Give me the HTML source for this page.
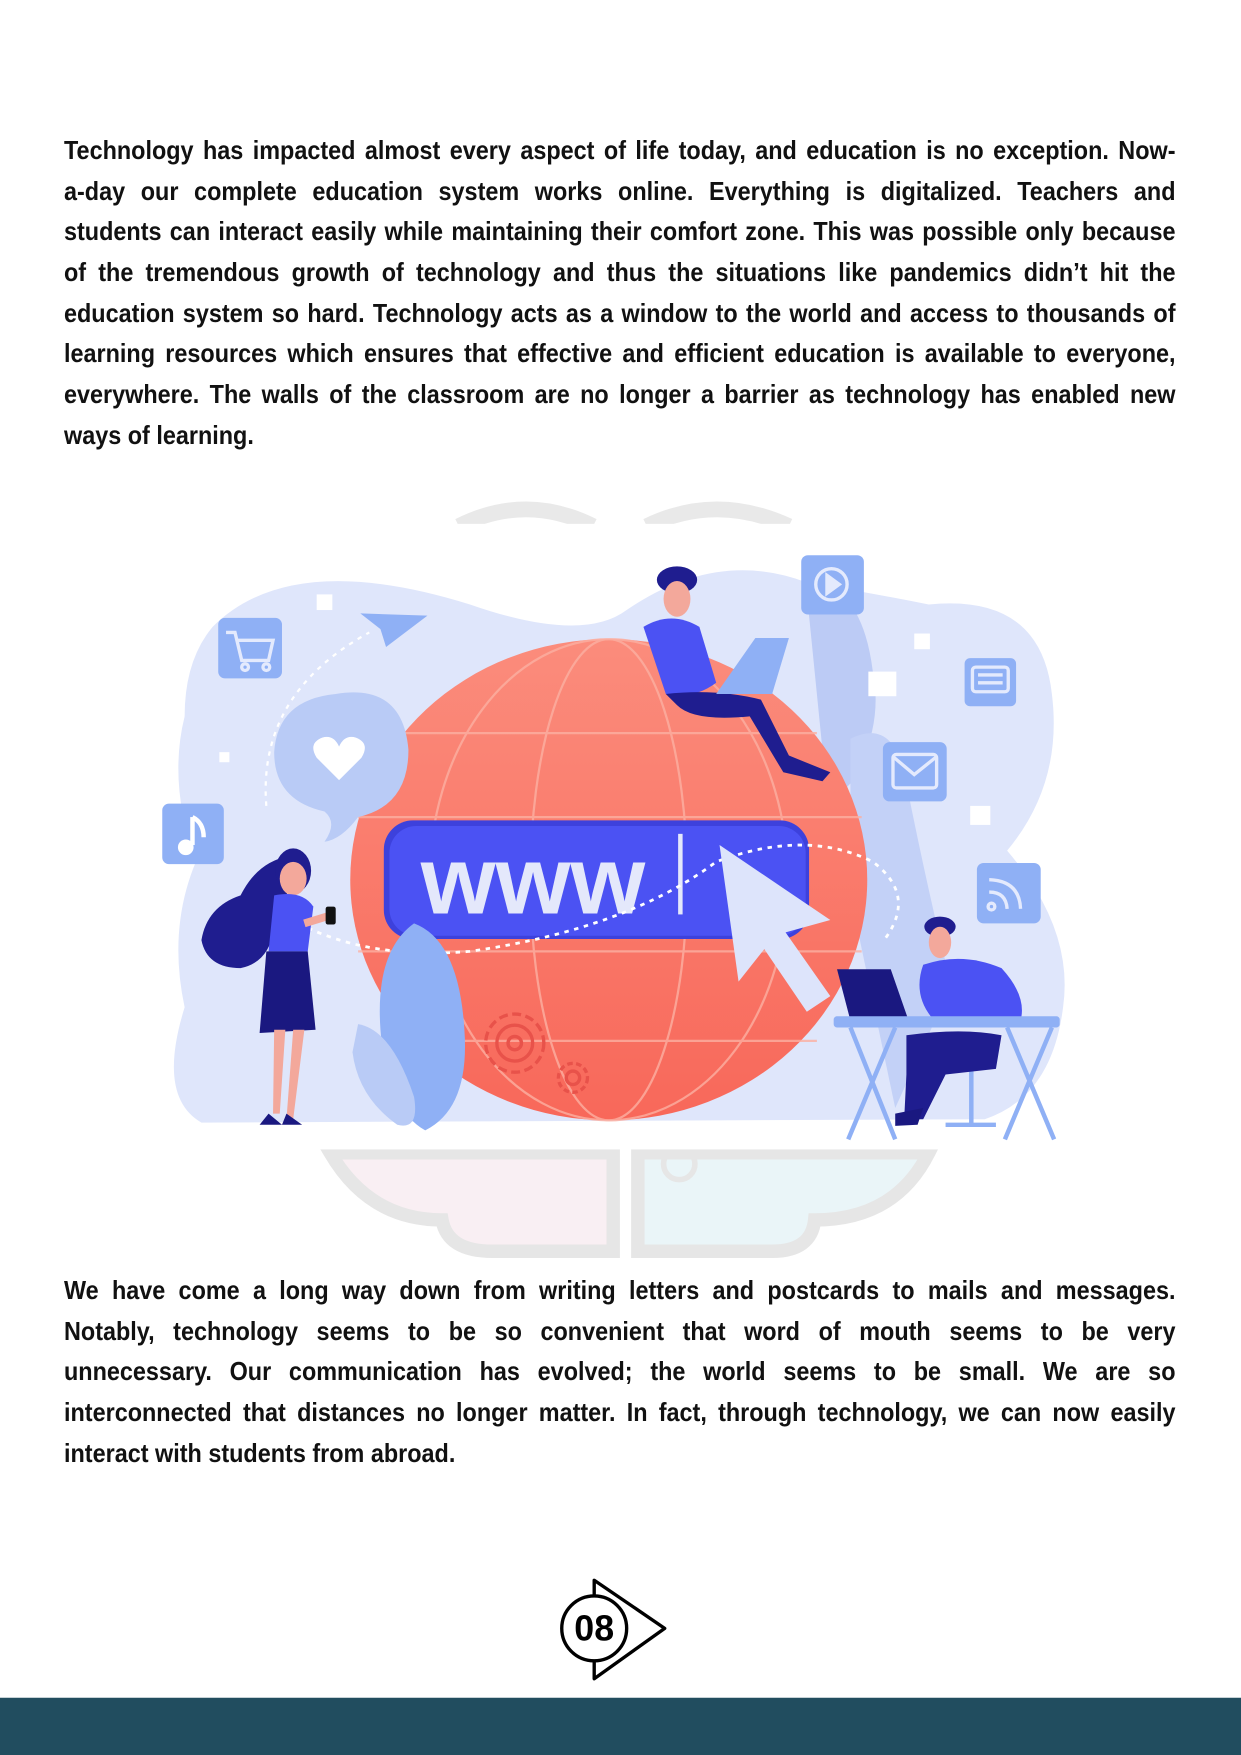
<!DOCTYPE html>
<html><head><meta charset="utf-8"><style>
html,body{margin:0;padding:0;background:#fff;}
body{width:1241px;height:1755px;position:relative;overflow:hidden;font-family:"Liberation Sans",sans-serif;}
.p{position:absolute;left:64px;width:1112px;}
.l{display:block;width:1235px;transform:scaleX(0.9);transform-origin:0 0;font-weight:bold;font-size:26px;line-height:40.7px;height:40.7px;color:#111;text-align:justify;text-align-last:justify;white-space:nowrap;}
.l.last{text-align-last:left;}
svg{position:absolute;left:0;top:0;}
</style></head><body>
<svg width="1241" height="1755" viewBox="0 0 1109 1568" xmlns="http://www.w3.org/2000/svg">
<g fill="none" stroke="#e9e9e9" stroke-width="14">
<path d="M410,470 Q470,440 530,470"/><path d="M578,470 Q640,440 705,470"/>
</g>
<path d="M295,1030 Q330,1090 395,1090 Q400,1118 440,1118 L548,1118 L548,1030Z" fill="#f9eff3" stroke="#e6e6e6" stroke-width="12"/>
<path d="M570,1030 L570,1118 L690,1118 Q725,1118 728,1090 Q800,1090 830,1030Z" fill="#eaf5f8" stroke="#e6e6e6" stroke-width="12"/>
<circle cx="607" cy="1040" r="14" fill="none" stroke="#e6e6e6" stroke-width="5"/>
<rect x="130" y="468" width="850" height="559" fill="#fff"/>
<path d="M190,560 Q260,490 420,540 Q520,575 560,545 Q640,490 720,520 Q780,530 830,540 Q930,530 940,620 Q950,700 900,760 Q960,830 950,900 Q940,980 880,1000 L180,1003 Q140,980 165,900 Q150,830 175,770 Q150,700 165,640 Q165,590 190,560Z" fill="#dfe6fb"/>
<path d="M720,520 Q770,520 780,600 Q790,650 760,700 L740,720Z" fill="#bccbf5"/>
<path d="M760,660 Q800,640 810,700 Q830,800 850,880 L800,990 L760,800Z" fill="#c3d1f7"/>
<defs><linearGradient id="g" x1="0" y1="0" x2="0" y2="1"><stop offset="0" stop-color="#fb8c7c"/><stop offset="1" stop-color="#f8685a"/></linearGradient></defs>
<ellipse cx="544" cy="786" rx="231" ry="215" fill="url(#g)"/>
<g fill="none" stroke="#fcb0a2" stroke-width="2" opacity="0.8">
<ellipse cx="544" cy="786" rx="70" ry="215"/><ellipse cx="544" cy="786" rx="160" ry="215"/>
<line x1="360" y1="655" x2="730" y2="655"/><line x1="320" y1="730" x2="770" y2="730"/><line x1="320" y1="850" x2="770" y2="850"/><line x1="360" y1="930" x2="730" y2="930"/>
</g>
<rect x="343" y="733" width="380" height="106" rx="26" fill="#3d41dc"/>
<rect x="348" y="738" width="372" height="98" rx="24" fill="#4b52f3"/>
<text x="376" y="816" font-family="Liberation Sans" font-weight="bold" font-size="86" fill="#e4e8fb">www</text>
<rect x="606" y="745" width="4" height="72" fill="#e4e8fb"/>
<path d="M230,800 Q300,860 420,850 Q560,830 640,770 Q720,740 780,770 Q820,800 790,840" fill="none" stroke="#fff" stroke-width="2.5" stroke-dasharray="4 5"/>
<path d="M238,720 Q230,620 330,565" fill="none" stroke="#fff" stroke-width="2" stroke-dasharray="4 5"/>
<path d="M643,755 L742,822 L702,833 L742,890 L721,904 L683,848 L660,877Z" fill="#dde4fb"/>
<g fill="#8fb0f5">
<rect x="195" y="552" width="57" height="54" rx="6"/><rect x="145" y="718" width="55" height="54" rx="6"/>
<rect x="716" y="496" width="56" height="53" rx="6"/><rect x="862" y="588" width="46" height="43" rx="5"/>
<rect x="789" y="663" width="57" height="53" rx="6"/><rect x="873" y="771" width="57" height="54" rx="6"/>
</g>
<g fill="none" stroke="#e4eafd" stroke-width="3">
<path d="M202,565 L210,565 L216,590 L240,590 L244,572 L212,572"/><circle cx="219" cy="596" r="3"/><circle cx="238" cy="596" r="3"/>
<circle cx="743" cy="522" r="14"/><path d="M739,514 L750,522 L739,530Z" fill="#e4eafd"/>
<rect x="869" y="596" width="32" height="22" rx="3"/><path d="M874,603 H896 M874,610 H896"/>
<rect x="798" y="674" width="39" height="30" rx="3"/><path d="M798,676 L817,692 L837,676"/>
<circle cx="886" cy="810" r="3"/><path d="M884,797 Q899,797 900,812 M884,786 Q911,787 912,812"/>
</g>
<path d="M172,730 L172,755" stroke="#fff" stroke-width="4"/><circle cx="166" cy="757" r="7" fill="#fff"/><path d="M172,730 Q182,735 182,748" stroke="#fff" stroke-width="4" fill="none"/>
<path d="M322,548 L382,550 L345,578 L340,562Z" fill="#8fb0f5"/>
<rect x="283" y="531" width="14" height="14" fill="#fff"/><rect x="817" y="566" width="14" height="14" fill="#fff"/><rect x="776" y="600" width="25" height="22" fill="#fff"/><rect x="867" y="720" width="18" height="17" fill="#fff"/><rect x="196" y="672" width="9" height="9" fill="#fff"/>
<path d="M300,620 Q360,610 365,670 Q365,720 320,730 Q305,750 290,752 Q302,735 290,725 Q245,715 245,672 Q248,625 300,620Z" fill="#b9cbf6"/>
<path d="M303,697 L283,677 Q275,664 288,659 Q298,656 303,667 Q308,656 318,659 Q331,664 323,677Z" fill="#fff"/>
<g fill="none" stroke="#e8524a" stroke-width="3"><circle cx="460" cy="932" r="26" stroke-dasharray="8 4"/><circle cx="460" cy="932" r="16"/><circle cx="460" cy="932" r="6"/><circle cx="512" cy="963" r="13" stroke-dasharray="5 3"/><circle cx="512" cy="963" r="6"/></g>
<path d="M370,825 Q410,840 415,920 Q420,990 380,1010 Q345,990 340,920 Q335,850 370,825Z" fill="#8fb0f5"/>
<path d="M320,915 Q350,920 370,980 Q375,1010 355,1005 Q320,980 315,940Z" fill="#b9cbf6"/>
<path d="M258,765 Q230,770 215,800 Q185,810 180,840 Q185,865 215,865 Q240,860 245,830 Q250,800 265,790Z" fill="#1f1d8f"/>
<ellipse cx="262" cy="778" rx="16" ry="20" fill="#1f1d8f"/>
<ellipse cx="262" cy="785" rx="12" ry="15" fill="#f3a89b"/>
<path d="M245,800 Q270,795 280,810 L275,850 L240,850Z" fill="#4b52f3"/>
<path d="M238,850 L275,850 L282,920 L232,923Z" fill="#1a1880"/>
<path d="M245,920 L255,920 L250,995 L244,995Z M262,920 L272,920 L262,1000 L256,1000Z" fill="#f3a89b"/>
<path d="M240,995 L252,1005 L232,1005Z M256,995 L270,1005 L252,1005Z" fill="#1a1880"/>
<path d="M272,825 L295,818" stroke="#f3a89b" stroke-width="7"/><rect x="291" y="810" width="9" height="16" rx="2" fill="#111"/>
<ellipse cx="605" cy="518" rx="18" ry="12" fill="#1f1d8f"/><ellipse cx="605" cy="535" rx="12" ry="16" fill="#f3a89b"/>
<path d="M575,560 Q600,545 625,560 L640,610 Q620,625 595,620Z" fill="#4b52f3"/>
<path d="M595,620 Q640,615 680,625 L705,675 L742,690 L735,698 L700,690 L670,640 Q620,645 605,630Z" fill="#1f1d8f"/>
<path d="M640,620 L675,570 L705,570 L690,620Z" fill="#8fb0f5"/>
<ellipse cx="840" cy="828" rx="14" ry="9" fill="#1f1d8f"/><ellipse cx="840" cy="842" rx="10" ry="14" fill="#f3a89b"/>
<path d="M825,862 Q860,850 895,865 Q918,890 912,912 L835,912 Q815,890 825,862Z" fill="#4b52f3"/>
<path d="M748,866 L796,866 L812,912 L760,912Z" fill="#1a1880"/>
<rect x="745" y="908" width="202" height="10" rx="3" fill="#8fb0f5"/>
<g stroke="#8fb0f5" stroke-width="4"><path d="M760,918 L800,1018 M800,918 L758,1018 M900,918 L942,1018 M940,918 L898,1018 M868,940 L868,1005 M845,1005 L890,1005"/></g>
<path d="M810,925 Q860,918 895,925 L890,955 L845,960 L825,1000 L808,1000 L810,960Z" fill="#1f1d8f"/>
<path d="M800,995 L825,990 L820,1005 L800,1006Z" fill="#1a1880"/>
<circle cx="531" cy="1455" r="29" fill="#fff" stroke="#000" stroke-width="3"/>
<path d="M531,1426 L531,1412 L594,1455 L531,1500 L531,1484" fill="none" stroke="#000" stroke-width="3" stroke-linejoin="round"/>
<text x="531" y="1466" text-anchor="middle" font-family="Liberation Sans" font-weight="bold" font-size="32" fill="#000">08</text>
<rect x="0" y="1517" width="1109" height="52" fill="#214d5f"/>
</svg>
<div class="p" style="top:130px">
<span class="l">Technology has impacted almost every aspect of life today, and education is no exception. Now-</span>
<span class="l">a-day our complete education system works online. Everything is digitalized. Teachers and</span>
<span class="l">students can interact easily while maintaining their comfort zone. This was possible only because</span>
<span class="l">of the tremendous growth of technology and thus the situations like pandemics didn’t hit the</span>
<span class="l">education system so hard. Technology acts as a window to the world and access to thousands of</span>
<span class="l">learning resources which ensures that effective and efficient education is available to everyone,</span>
<span class="l">everywhere. The walls of the classroom are no longer a barrier as technology has enabled new</span>
<span class="l last">ways of learning.</span>
</div>
<div class="p" style="top:1270px">
<span class="l">We have come a long way down from writing letters and postcards to mails and messages.</span>
<span class="l">Notably, technology seems to be so convenient that word of mouth seems to be very</span>
<span class="l">unnecessary. Our communication has evolved; the world seems to be small. We are so</span>
<span class="l">interconnected that distances no longer matter. In fact, through technology, we can now easily</span>
<span class="l last">interact with students from abroad.</span>
</div>
</body></html>
